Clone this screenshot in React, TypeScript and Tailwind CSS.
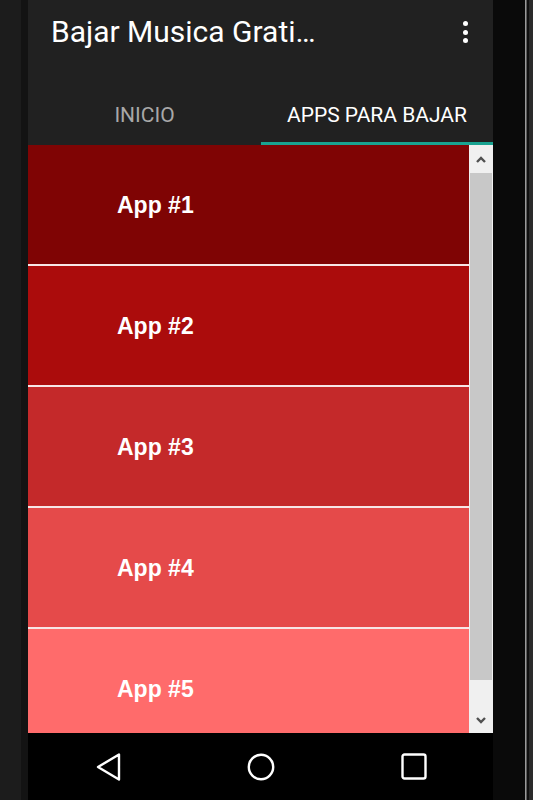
import React from "react";

const items = [
  { label: "App #1", bg: "bg-[#7f0404]" },
  { label: "App #2", bg: "bg-[#ab0c0c]" },
  { label: "App #3", bg: "bg-[#c4292a]" },
  { label: "App #4", bg: "bg-[#e54a4a]" },
  { label: "App #5", bg: "bg-[#ff6b6b]" },
];

export default function App() {
  return (
    <div className="w-[533px] h-[800px] flex bg-black overflow-hidden">
      {/* left bezel */}
      <div className="flex h-full">
        <div className="w-[21px] h-full bg-[#1c1c1c]" />
        <div className="w-[7px] h-full bg-[#131313]" />
      </div>

      {/* screen */}
      <div className="w-[465px] h-full flex flex-col">
        <div className="bg-[#212121] flex flex-col">
          <div className="h-[64px] flex items-center justify-between pl-[23px] pr-[25px]">
            <div
              className="text-white text-[30px] leading-none"
              style={{ fontFamily: "Roboto, 'Liberation Sans', sans-serif" }}
            >
              Bajar Musica Grati…
            </div>
            <div className="flex flex-col items-center gap-[3.5px]">
              <div className="w-[5px] h-[5px] rounded-full bg-white" />
              <div className="w-[5px] h-[5px] rounded-full bg-white" />
              <div className="w-[5px] h-[5px] rounded-full bg-white" />
            </div>
          </div>
          <div
            className="h-[81px] flex"
            style={{ fontFamily: "Roboto, 'Liberation Sans', sans-serif" }}
          >
            <div className="w-[233px] flex flex-col">
              <div className="flex-1 flex items-start justify-center pt-[41px] text-[21px] leading-none text-[#a8a8a8]">
                INICIO
              </div>
              <div className="h-[3px]" />
            </div>
            <div className="flex-1 flex flex-col">
              <div className="flex-1 flex items-start justify-center pt-[41px] text-[21px] leading-none text-white">
                APPS PARA BAJAR
              </div>
              <div className="h-[3px] bg-[#19a391]" />
            </div>
          </div>
        </div>

        {/* content */}
        <div className="flex-1 flex overflow-hidden">
          <div className="w-[441px] flex flex-col overflow-hidden">
            {items.map((it, i) => (
              <React.Fragment key={it.label}>
                {i > 0 && <div className="h-[2px] shrink-0 bg-[#f7e6e6]" />}
                <div
                  className={`h-[119px] shrink-0 flex items-center pl-[89px] pt-[2px] ${it.bg}`}
                >
                  <span
                    className="text-white font-bold text-[23px] leading-none"
                    style={{ fontFamily: "'Liberation Sans', Arial, sans-serif" }}
                  >
                    {it.label}
                  </span>
                </div>
              </React.Fragment>
            ))}
          </div>
          {/* scrollbar */}
          <div className="w-[24px] bg-[#f0f0f0] flex flex-col">
            <div className="h-[28px] flex items-center justify-center">
              <svg width="10" height="7" viewBox="0 0 10 7">
                <path d="M1 6 L5 2 L9 6" fill="none" stroke="#505050" strokeWidth="2.4" />
              </svg>
            </div>
            <div className="h-[507px] mx-[1px] bg-[#c8c8c8]" />
            <div className="flex-1 flex items-end justify-center pb-[9px]">
              <svg width="10" height="7" viewBox="0 0 10 7">
                <path d="M1 1 L5 5 L9 1" fill="none" stroke="#505050" strokeWidth="2.4" />
              </svg>
            </div>
          </div>
        </div>

        {/* nav bar */}
        <div className="h-[67px] bg-black flex items-center justify-center gap-[125px] shrink-0">
          <div className="w-[28px] h-[30px] flex items-center justify-center">
            <svg width="28" height="30" viewBox="0 0 28 30">
              <path
                d="M4 15 L25 2.5 L25 27.5 Z"
                fill="none"
                stroke="white"
                strokeWidth="2.4"
                strokeLinejoin="round"
              />
            </svg>
          </div>
          <div className="w-[28px] h-[30px] flex items-center justify-center">
            <svg width="28" height="28" viewBox="0 0 28 28">
              <circle cx="14" cy="14" r="12.2" fill="none" stroke="white" strokeWidth="2.4" />
            </svg>
          </div>
          <div className="w-[28px] h-[30px] flex items-center justify-center">
            <svg width="26" height="27" viewBox="0 0 26 27">
              <rect
                x="1.5"
                y="1.5"
                width="23"
                height="24"
                rx="2"
                fill="none"
                stroke="white"
                strokeWidth="2.4"
              />
            </svg>
          </div>
        </div>
      </div>

      {/* right bezel */}
      <div className="flex h-full">
        <div className="w-[32px] h-full bg-[#0a0a0a]" />
        <div className="w-[1px] h-full bg-[#9a9a9a]" />
        <div className="w-[1px] h-full bg-[#5a5a5a]" />
        <div className="w-[2px] h-full bg-[#101010]" />
        <div className="w-[4px] h-full bg-[#2a2a2a]" />
      </div>
    </div>
  );
}
